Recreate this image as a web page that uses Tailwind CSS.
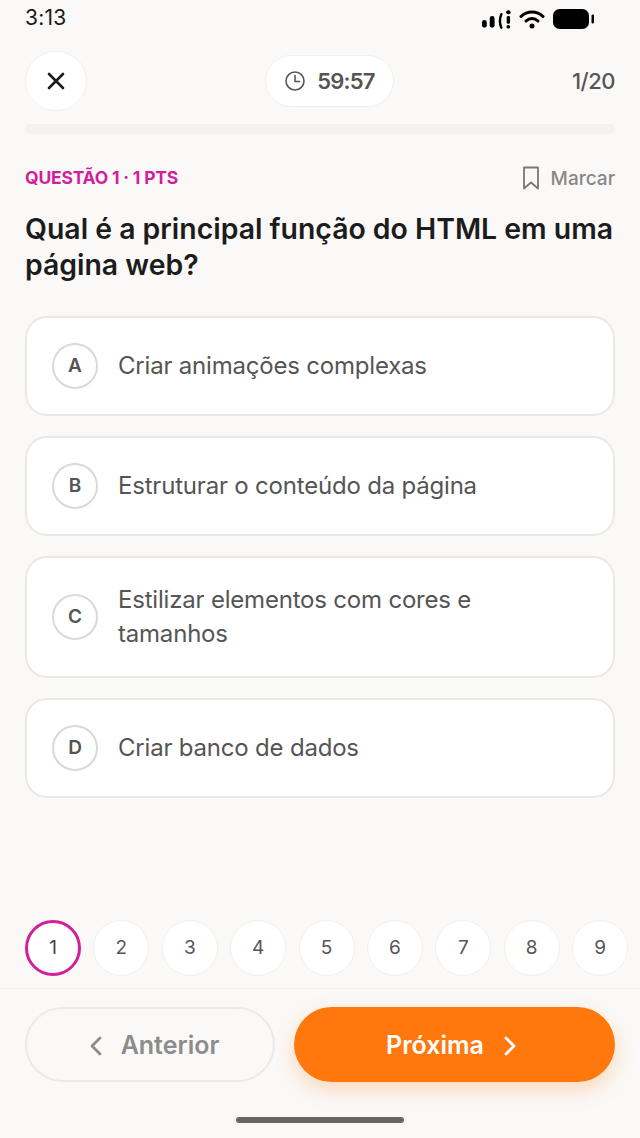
<!DOCTYPE html>
<html lang="pt">
<head>
  <meta charset="UTF-8" />
  <meta name="viewport" content="width=device-width, initial-scale=1.0"/>
  <title>Questão</title>
  <script src="https://cdn.jsdelivr.net/npm/@tailwindcss/browser@4"></script>
</head>
<body class="bg-[#faf9f7] font-['Inter',sans-serif] text-[#1c1c1c]">
<div class="w-[640px] h-[1138px] overflow-hidden flex flex-col">

  <!-- Status bar -->
  <div class="h-[37px] pl-[25px] pr-[44px] flex justify-between items-center">
    <span class="text-[21px] tracking-[0.2px] text-[#1a1a1a] -mt-[2px]">3:13</span>
    <div class="flex items-center gap-[7px]">
      <svg width="31" height="20" viewBox="0 0 32 20" fill="#000" class="-ml-[2px]">
        <rect x="1" y="11" width="5" height="8" rx="2.5"/>
        <rect x="9" y="7" width="5" height="12" rx="2.5"/>
        <path d="M21 5 Q18 12 21 19" fill="none" stroke="#000" stroke-width="2.5" stroke-linecap="round"/>
        <rect x="26" y="1" width="4.5" height="4" rx="2"/>
        <rect x="26.5" y="7" width="3.5" height="8" rx="1.5"/>
        <circle cx="28.2" cy="18" r="1.9"/>
      </svg>
      <svg width="26" height="20" viewBox="0 0 26 20" fill="none" stroke="#000" stroke-width="3" stroke-linecap="round">
        <path d="M2 7.5 C8 1.5 18 1.5 24 7.5"/>
        <path d="M7 12 C10.5 8.5 15.500 8.500 19 12"/>
        <circle cx="13" cy="17" r="2.500" fill="#000" stroke="none"/>
      </svg>
      <svg width="44" height="22" viewBox="0 0 44 22" fill="#000">
        <rect x="1" y="1" width="36" height="20" rx="6.500"/>
        <rect x="39.500" y="6.500" width="2.500" height="9" rx="1.200"/>
      </svg>
    </div>
  </div>

  <!-- Header -->
  <header class="mt-[14px] px-[25px] flex justify-between items-center">
    <button class="w-[62px] h-[60px] rounded-full bg-white border border-[#f2f0ed] flex items-center justify-center">
      <svg width="24" height="24" viewBox="0 0 24 24" fill="none" stroke="#1c1c1c" stroke-width="2.600" stroke-linecap="round"><path d="M5 5l14 14M19 5L5 19"/></svg>
    </button>
    <div class="w-[129px] h-[52px] rounded-full bg-white border border-[#f2f0ed] flex items-center justify-center gap-[11px]">
      <svg width="22" height="22" viewBox="0 0 22 22" fill="none" stroke="#555" stroke-width="1.600" stroke-linecap="round" stroke-linejoin="round"><circle cx="11" cy="11" r="9"/><path d="M11 5.500V11.500H15.500"/></svg>
      <span class="text-[22px] font-semibold tracking-[-0.8px] text-[#555]">59:57</span>
    </div>
    <span class="text-[22px] font-medium tracking-[-0.5px] text-[#555]">1/20</span>
  </header>

  <!-- Progress -->
  <div class="mx-[25px] mt-[13px] h-[10px] rounded-full bg-[#f3f2ef]"></div>

  <!-- Question -->
  <main class="px-[25px] flex-1">
    <div class="mt-[30px] flex justify-between items-center h-[28px]">
      <span class="text-[17.500px] font-bold tracking-[-0.2px] text-[#d21f9a]">QUESTÃO 1 · 1 PTS</span>
      <div class="flex items-center gap-[10px]">
        <svg width="20" height="26" viewBox="0 0 20 26" fill="none" stroke="#777" stroke-width="1.800" stroke-linejoin="round"><path d="M3 2.500H17V23.500L10 17.500L3 23.500Z"/></svg>
        <span class="text-[19px] font-medium text-[#888] mt-[2px]">Marcar</span>
      </div>
    </div>
    <h1 class="mt-[19px] text-[28.400px] leading-[36px] font-semibold text-[#1c1c1c]">Qual é a principal função do HTML em uma página web?</h1>

    <div class="mt-[33px] flex flex-col gap-[20px]">
      <div class="min-h-[100px] py-[25px] pl-[25px] pr-[40px] bg-white border-2 border-[#e9e8e5] rounded-[22px] flex items-center gap-[20px]">
        <span class="shrink-0 w-[46px] h-[46px] rounded-full border-2 border-[#d9d9d6] flex items-center justify-center text-[19px] font-semibold text-[#555]">A</span>
        <span class="text-[24px] leading-[34px] tracking-[-0.2px] text-[#555]">Criar animações complexas</span>
      </div>
      <div class="min-h-[100px] py-[25px] pl-[25px] pr-[40px] bg-white border-2 border-[#e9e8e5] rounded-[22px] flex items-center gap-[20px]">
        <span class="shrink-0 w-[46px] h-[46px] rounded-full border-2 border-[#d9d9d6] flex items-center justify-center text-[19px] font-semibold text-[#555]">B</span>
        <span class="text-[24px] leading-[34px] tracking-[-0.2px] text-[#555]">Estruturar o conteúdo da página</span>
      </div>
      <div class="py-[25px] pl-[25px] pr-[40px] bg-white border-2 border-[#e9e8e5] rounded-[22px] flex items-center gap-[20px]">
        <span class="shrink-0 w-[46px] h-[46px] rounded-full border-2 border-[#d9d9d6] flex items-center justify-center text-[19px] font-semibold text-[#555]">C</span>
        <span class="text-[24px] leading-[34px] tracking-[-0.2px] text-[#555]">Estilizar elementos com cores e tamanhos</span>
      </div>
      <div class="min-h-[100px] py-[25px] pl-[25px] pr-[40px] bg-white border-2 border-[#e9e8e5] rounded-[22px] flex items-center gap-[20px]">
        <span class="shrink-0 w-[46px] h-[46px] rounded-full border-2 border-[#d9d9d6] flex items-center justify-center text-[19px] font-semibold text-[#555]">D</span>
        <span class="text-[24px] leading-[34px] tracking-[-0.2px] text-[#555]">Criar banco de dados</span>
      </div>
    </div>
  </main>

  <!-- Question numbers -->
  <div class="pl-[25px] flex gap-[12.400px] pb-[12px] border-b border-[#f0efec]">
    <span class="shrink-0 w-[56px] h-[56px] rounded-full bg-white border-[3px] border-[#d21f9a] flex items-center justify-center text-[19px] text-[#444]">1</span>
    <span class="shrink-0 w-[56px] h-[56px] rounded-full bg-white border border-[#f2f0ed] flex items-center justify-center text-[19px] text-[#555]">2</span>
    <span class="shrink-0 w-[56px] h-[56px] rounded-full bg-white border border-[#f2f0ed] flex items-center justify-center text-[19px] text-[#555]">3</span>
    <span class="shrink-0 w-[56px] h-[56px] rounded-full bg-white border border-[#f2f0ed] flex items-center justify-center text-[19px] text-[#555]">4</span>
    <span class="shrink-0 w-[56px] h-[56px] rounded-full bg-white border border-[#f2f0ed] flex items-center justify-center text-[19px] text-[#555]">5</span>
    <span class="shrink-0 w-[56px] h-[56px] rounded-full bg-white border border-[#f2f0ed] flex items-center justify-center text-[19px] text-[#555]">6</span>
    <span class="shrink-0 w-[56px] h-[56px] rounded-full bg-white border border-[#f2f0ed] flex items-center justify-center text-[19px] text-[#555]">7</span>
    <span class="shrink-0 w-[56px] h-[56px] rounded-full bg-white border border-[#f2f0ed] flex items-center justify-center text-[19px] text-[#555]">8</span>
    <span class="shrink-0 w-[56px] h-[56px] rounded-full bg-white border border-[#f2f0ed] flex items-center justify-center text-[19px] text-[#555]">9</span>
  </div>

  <!-- Footer buttons -->
  <footer class="px-[25px] pt-[18px] flex gap-[19px]">
    <button class="w-[250px] h-[75px] pl-[7px] pt-[2px] rounded-full border-2 border-[#ebeae7] flex items-center justify-center gap-[17px] text-[25px] font-semibold text-[#8c8c8c]">
      <svg width="16" height="24" viewBox="0 0 16 24" fill="none" stroke="#8c8c8c" stroke-width="2.800" stroke-linecap="round" stroke-linejoin="round"><path d="M12 4L4 12L12 20"/></svg>
      Anterior
    </button>
    <button class="flex-1 h-[75px] pr-[5px] pt-[2px] rounded-full bg-[#ff780d] shadow-[0_8px_20px_rgba(255,120,13,0.25)] flex items-center justify-center gap-[18px] text-[25px] font-semibold text-white">
      Próxima
      <svg width="16" height="24" viewBox="0 0 16 24" fill="none" stroke="#fff" stroke-width="2.800" stroke-linecap="round" stroke-linejoin="round"><path d="M4 4L12 12L4 20"/></svg>
    </button>
  </footer>

  <!-- Home indicator -->
  <div class="mt-[35px] mb-[15px] mx-auto w-[168px] h-[6px] rounded-full bg-[#666]"></div>
</div>
</body>
</html>
